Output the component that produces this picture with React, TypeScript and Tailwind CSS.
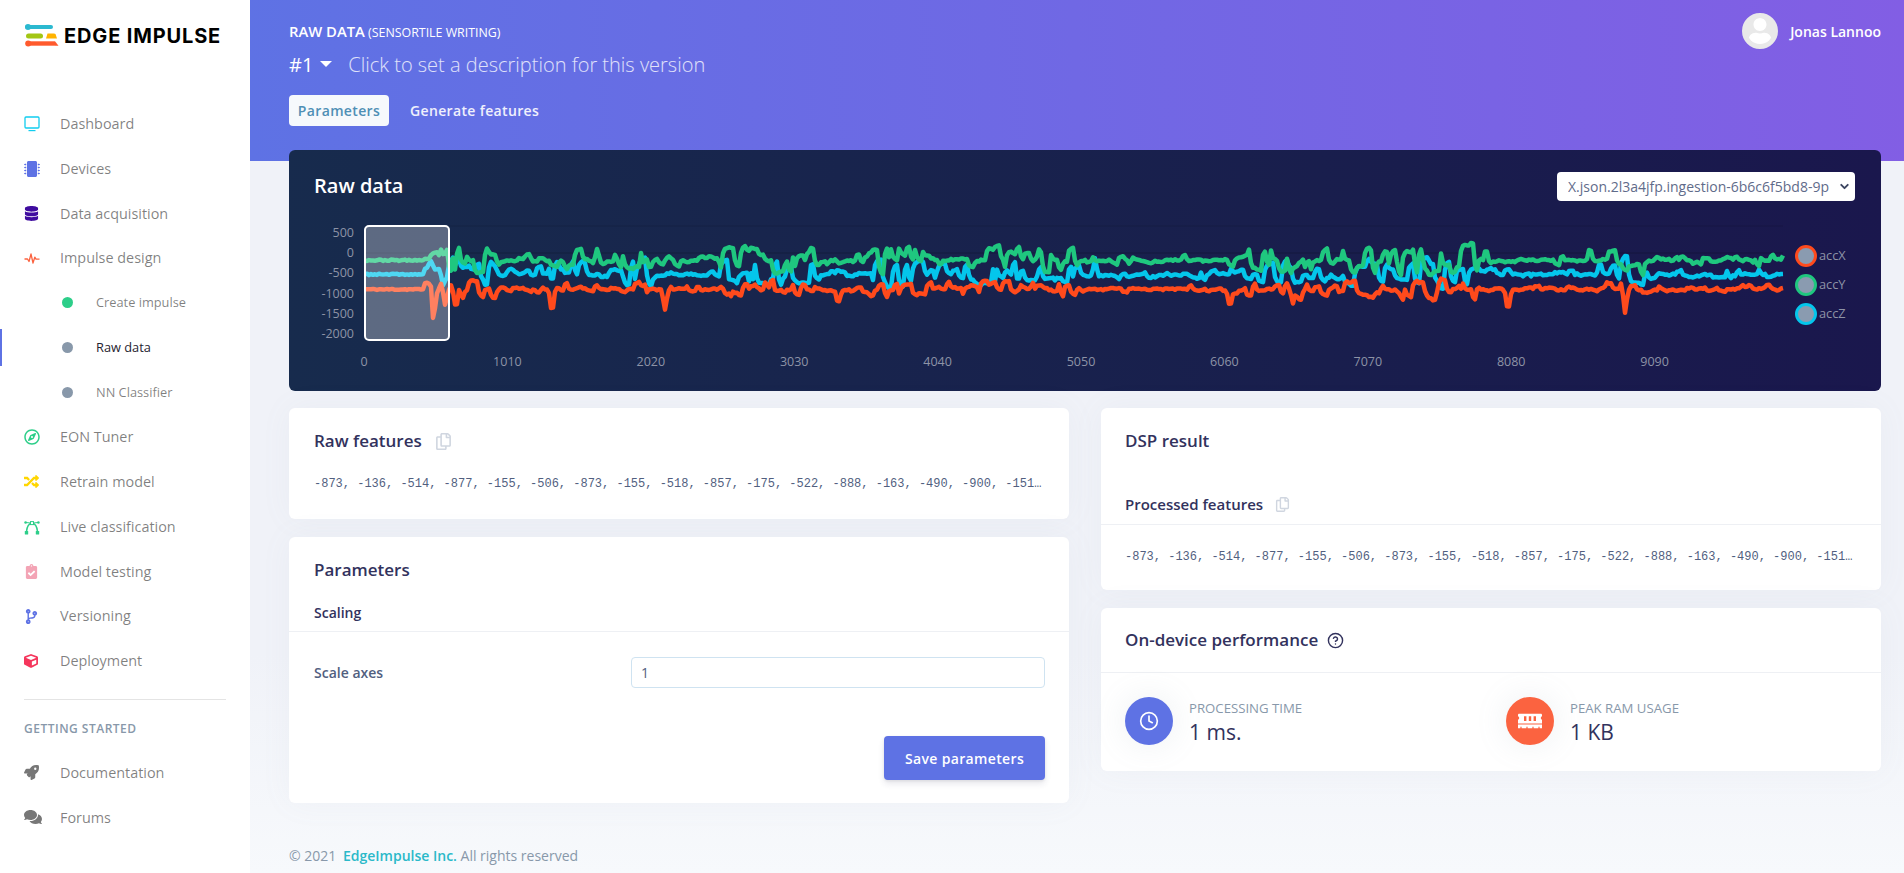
import React from "react";
import { Clock, CircleHelp, ChevronDown } from "lucide-react";
import { FaMicrochip, FaDatabase, FaRandom, FaClipboardCheck, FaCodeBranch, FaCube, FaRocket, FaComments, FaRegCompass, FaRegCopy, FaMemory, FaUser } from "react-icons/fa";

const sans = "font-['Open_Sans','Noto_Sans',sans-serif]";

function rng(seed: number) {
  return () => {
    seed |= 0; seed = (seed + 0x6d2b79f5) | 0;
    let t = Math.imul(seed ^ (seed >>> 15), 1 | seed);
    t = (t + Math.imul(t ^ (t >>> 7), 61 | t)) ^ t;
    return ((t ^ (t >>> 14)) >>> 0) / 4294967296;
  };
}

const X0 = 76, X1 = 1494, ZERO = 43;
const toY = (v: number) => ZERO - (v * 20.2) / 500;

// shared "movement" envelope: the three axes are busy at the same moments
const envelope: number[] = (() => {
  const r = rng(5);
  const out: number[] = [];
  let e = 0.4, left = 0;
  for (let x = X0; x <= X1; x += 2) {
    if (left-- <= 0) { e = r() < 0.45 ? 0.3 + r() * 0.2 : 0.85 + r() * 0.4; left = 10 + Math.floor(r() * 20); }
    out.push(e);
  }
  return out;
})();

function series(seed: number, base: number, up: number, down: number, rate: number, spikes: [number, number][]) {
  const r = rng(seed);
  const pts: string[] = [];
  let cur = base, target = base, left = 0, i = 0;
  for (let x = X0; x <= X1; x += 2, i++) {
    const page = x + 289;
    let v: number;
    if (page < 425) {
      v = base + (r() - 0.5) * 34;
      cur = v;
    } else {
      const e = envelope[i];
      if (left-- <= 0) {
        left = Math.floor(r() * 3);
        const roll = r();
        if (roll < rate * e) target = base + up * e * (0.3 + r() * 0.9);
        else if (roll < rate * e * 2) target = base - down * e * (0.3 + r() * 0.9);
        else target = base + (r() - 0.5) * 70;
      }
      cur += (target - cur) * 0.7;
      v = cur + (r() - 0.5) * 40;
    }
    for (const [sx, sv] of spikes) {
      const d = Math.abs(page - sx);
      if (d < 3.5) v = v + ((sv - v) * (3.5 - d)) / 3.5;
    }
    pts.push(`${x},${toY(v).toFixed(1)}`);
  }
  return pts.join(" ");
}

const red = series(11, -900, 220, 210, 0.3, [[431, -650], [434, -1920], [437, -1000], [445, -1280], [451, -800], [456, -1450], [552, -1560], [665, -1400], [838, -1300], [1230, -1380], [1508, -1500], [1293, -1250], [1625, -1480]]);
const green = series(23, -180, 330, 300, 0.42, [[437, 20], [441, 110], [444, -60], [597, 100], [745, 170], [1040, 180], [1590, 150], [1486, 170]]);
const blue = series(37, -530, 360, 270, 0.5, [[431, -200], [436, -420], [443, -800], [556, -150], [1095, -130], [1600, -200]]);

function Chart() {
  const yl = [500, 0, -500, -1000, -1500, -2000];
  const xl = ["0", "1010", "2020", "3030", "4040", "5050", "6060", "7070", "8080", "9090"];
  const leg: [string, string][] = [["#ff4a1c", "accX"], ["#1fc77f", "accY"], ["#04c6ec", "accZ"]];
  return (
    <svg width={1592} height={175} className="block" style={{ fontFamily: "'Open Sans',sans-serif" }}>
      <line x1={76} x2={1494} y1={16} y2={16} stroke="#000" strokeOpacity={0.12} />
      <line x1={76} x2={1494} y1={43} y2={43} stroke="#000" strokeOpacity={0.2} />
      {yl.map((v, i) => (
        <text key={v} x={65} y={27 + i * 20.2} textAnchor="end" fontSize={12.5} fill="#8d93a6">{v}</text>
      ))}
      {xl.map((t, i) => (
        <text key={t} x={75 + i * 143.4} y={156} textAnchor="middle" fontSize={12.5} fill="#8d93a6">{t}</text>
      ))}
      <polyline points={blue} fill="none" stroke="#04c6ec" strokeWidth={4.5} strokeLinejoin="round" />
      <polyline points={green} fill="none" stroke="#1fc77f" strokeWidth={4.5} strokeLinejoin="round" />
      <polyline points={red} fill="none" stroke="#ff4a1c" strokeWidth={4.5} strokeLinejoin="round" />
      <rect x={76} y={16} width={84} height={114} rx={4} fill="#fff" fillOpacity={0.3} stroke="#fff" strokeWidth={2} />
      {leg.map(([c, n], i) => (
        <g key={n}>
          <circle cx={1517} cy={46 + i * 29} r={9.5} fill="#8a9bb0" stroke={c} strokeWidth={3} />
          <text x={1530} y={50 + i * 29} fontSize={12.8} fill="#8d93a6">{n}</text>
        </g>
      ))}
    </svg>
  );
}

function Bezier() {
  return (
    <svg width={16} height={16} viewBox="0 0 16 16" fill="none">
      <path d="M2.5 12.5C3 7.5 5 4.5 8 4c3 .5 5 3.5 5.5 8.5" stroke="#2dce89" strokeWidth={1.5} />
      <path d="M2 3.5L6.5 4M9.5 4L14 3.5" stroke="#2dce89" strokeWidth={1} />
      <rect x={6.5} y={2.6} width={3} height={3} fill="#fff" stroke="#2dce89" strokeWidth={1} />
      <circle cx={1.6} cy={3.5} r={1.3} fill="#2dce89" />
      <circle cx={14.4} cy={3.5} r={1.3} fill="#2dce89" />
      <rect x={0.8} y={12} width={3.4} height={3.6} rx={0.5} fill="#2dce89" />
      <rect x={11.8} y={12} width={3.4} height={3.6} rx={0.5} fill="#2dce89" />
    </svg>
  );
}

function Screen() {
  return (
    <svg width={16} height={16} viewBox="0 0 16 16" fill="none">
      <rect x={1} y={1} width={14} height={11} rx={1} stroke="#11cdef" strokeWidth={1.3} />
      <path d="M4.5 14.6h7" stroke="#11cdef" strokeWidth={1.2} />
    </svg>
  );
}

function Wave() {
  return (
    <svg width={16} height={16} viewBox="0 0 16 16" fill="none">
      <path d="M0.5 9H3.5L5 11.5 7 4 9 13 10.8 7.2 12 9.2H15.5" stroke="#fb6340" strokeWidth={1.3} strokeLinejoin="round" />
    </svg>
  );
}

function Logo() {
  return (
    <svg width={34} height={24} viewBox="0 0 34 24">
      <path d="M2 3h24" stroke="#2bb9d0" strokeWidth={4} strokeLinecap="round" />
      <circle cx={3} cy={3} r={3} fill="#2bb9d0" />
      <rect x={1} y={9.5} width={17} height={5} rx={2.5} fill="#a3c614" />
      <path d="M21 14.5 l1.5-5 h6.5 a2 2 0 0 1 2 2 l1 3z" fill="#ffb300" />
      <path d="M2 19.5h28" stroke="#ff5a2d" strokeWidth={4.4} />
      <circle cx={3.2} cy={19.5} r={3} fill="#ff5a2d" />
      <path d="M30 17.3 l3.5 4.4 h-3.5z" fill="#ff5a2d" />
    </svg>
  );
}

type Item = { label: string; icon?: React.ReactNode; dot?: string; active?: boolean };
const items: Item[] = [
  { label: "Dashboard", icon: <Screen /> },
  { label: "Devices", icon: <FaMicrochip size={16} color="#5e72e4" /> },
  { label: "Data acquisition", icon: <FaDatabase size={15} color="#3f0c9f" /> },
  { label: "Impulse design", icon: <Wave /> },
  { label: "Create impulse", dot: "bg-[#2dce89]" },
  { label: "Raw data", dot: "bg-[#8898aa]", active: true },
  { label: "NN Classifier", dot: "bg-[#8898aa]" },
  { label: "EON Tuner", icon: <FaRegCompass size={16} color="#2dce89" /> },
  { label: "Retrain model", icon: <FaRandom size={15} color="#ffd600" /> },
  { label: "Live classification", icon: <Bezier /> },
  { label: "Model testing", icon: <FaClipboardCheck size={15} color="#f3a4b5" /> },
  { label: "Versioning", icon: <FaCodeBranch size={15} color="#5e72e4" /> },
  { label: "Deployment", icon: <FaCube size={14} color="#f5365c" /> },
];

function NavRow({ item }: { item: Item }) {
  if (item.dot) {
    return (
      <div className="relative flex h-[44.75px] items-center pl-[62px]">
        {item.active && <div className="absolute left-0 top-[4px] h-[37px] w-[2px] bg-[#5e72e4]" />}
        <span className={`h-[11px] w-[11px] rounded-full ${item.dot}`} />
        <span className={`ml-[23px] text-[12.8px] ${item.active ? "text-[#1f2430]" : "text-black/50"}`}>{item.label}</span>
      </div>
    );
  }
  return (
    <div className="flex h-[44.75px] items-center pl-[24px]">
      <span className="flex w-[36px] items-center">{item.icon}</span>
      <span className="text-[14.4px] text-black/50">{item.label}</span>
    </div>
  );
}

function Sidebar() {
  return (
    <aside className="flex h-[873px] w-[250px] shrink-0 flex-col bg-white">
      <div className="flex h-[101.5px] items-start gap-[5px] pl-[25px] pt-[24px]">
        <Logo />
        <span className="font-['Inter',sans-serif] text-[20px] font-bold leading-[24px] tracking-[0.85px] text-black">EDGE IMPULSE</span>
      </div>
      {items.map((i) => <NavRow key={i.label} item={i} />)}
      <div className="mx-[24px] mt-[16px] border-t border-[#e4e4e4]" />
      <div className="ml-[24px] mt-[20px] text-[12px] font-semibold leading-[18px] tracking-[0.5px] text-[#8898aa]">GETTING STARTED</div>
      <div className="mt-[12px]">
        <NavRow item={{ label: "Documentation", icon: <FaRocket size={15} color="#777" /> }} />
        <NavRow item={{ label: "Forums", icon: <FaComments size={18} color="#777" /> }} />
      </div>
    </aside>
  );
}

function Header() {
  return (
    <header className="h-[161px] bg-[linear-gradient(87deg,#5e72e4,#825ee4)] pl-[39px] pr-[23px] text-white">
      <div className="flex items-start justify-between">
        <div>
          <div className="pt-[22px] text-[12.4px] leading-[19px]">
            <span className="text-[14.8px] font-semibold">RAW DATA</span> <span>(SENSORTILE WRITING)</span>
          </div>
          <div className="mt-[8px] flex h-[30px] items-center text-[20px] leading-[30px]">
            <span>#1</span>
            <span className="ml-[7px] mt-[-2px] h-0 w-0 border-x-[6px] border-t-[6px] border-x-transparent border-t-white" />
            <span className="ml-[16px] font-light text-white/80">Click to set a description for this version</span>
          </div>
        </div>
        <div className="flex items-center pt-[13px]">
          <span className="flex h-[36px] w-[36px] items-end justify-center overflow-hidden rounded-full border-[5px] border-[#e9e9e9] bg-[#e9e9e9]">
            <FaUser size={26} color="#fff" />
          </span>
          <span className="ml-[12px] text-[14px] font-semibold">Jonas Lannoo</span>
        </div>
      </div>
      <div className="mt-[15px] flex items-center">
        <span className="flex h-[31px] w-[100px] items-center justify-center rounded-[4px] bg-[#f6f9fc] text-[14px] font-semibold tracking-[0.35px] text-[#4f8fb5]">Parameters</span>
        <span className="ml-[21px] text-[14px] font-semibold tracking-[0.35px] text-white/90">Generate features</span>
      </div>
    </header>
  );
}

const raw = "-873, -136, -514, -877, -155, -506, -873, -155, -518, -857, -175, -522, -888, -163, -490, -900, -151, -502, -881, -147, -510, -869, -159";
const card = "rounded-[6px] bg-white shadow-[0_0_32px_rgba(136,152,170,0.06)]";
const mono = "truncate font-['Liberation_Mono',monospace] text-[12px] leading-[18px] text-[#525f7f]";

function Stat({ color, icon, label, value }: { color: string; icon: React.ReactNode; label: string; value: string }) {
  return (
    <div className="flex items-center">
      <span className={`flex h-[48px] w-[48px] items-center justify-center rounded-full shadow-[0_0_32px_rgba(136,152,170,0.15)] ${color}`}>{icon}</span>
      <div className="ml-[16px]">
        <div className="text-[13.2px] font-medium leading-[18px] text-[#8898aa]">{label}</div>
        <div className="mt-[3px] text-[21px] font-medium leading-[24px] text-[#32325d]">{value}</div>
      </div>
    </div>
  );
}

function Content() {
  return (
    <div className="relative -mt-[11px] pl-[39px] pr-[23px]">
      <section className="h-[241px] rounded-[6px] bg-[linear-gradient(87deg,#172b4d,#1a174d)]">
        <div className="flex h-[60px] items-start justify-between pl-[25px] pr-[26px] pt-[22px]">
          <span className="text-[20px] font-semibold leading-[28px] text-white">Raw data</span>
          <div className="relative">
            <select defaultValue="a" className="block h-[29px] w-[298px] appearance-none rounded-[4px] bg-white pl-[11px] pr-[20px] text-[14px] text-[#5f6b8a] outline-none">
              <option value="a">X.json.2l3a4jfp.ingestion-6b6c6f5bd8-9p</option>
            </select>
            <ChevronDown size={13} strokeWidth={3.5} color="#3b4560" className="pointer-events-none absolute right-[4px] top-[8px]" />
          </div>
        </div>
        <Chart />
      </section>
      <div className="mt-[17px] flex gap-[32px]">
        <div className="flex min-w-0 flex-1 flex-col gap-[18px]">
          <section className={`${card} h-[111px] pl-[25px] pr-[24px]`}>
            <div className="flex items-center pt-[20px]">
              <span className="text-[17px] font-semibold leading-[26px] text-[#32325d]">Raw features</span>
              <FaRegCopy size={17} color="#d0d6e0" className="ml-[13px]" />
            </div>
            <div className={`${mono} mt-[21px]`}>{raw}</div>
          </section>
          <section className={`${card} h-[266px]`}>
            <div className="px-[25px] pt-[20px] text-[17px] font-semibold leading-[26px] text-[#32325d]">Parameters</div>
            <div className="mt-[20px] border-b border-[#eef0f4] px-[25px] pb-[8px] text-[14px] font-semibold leading-[20px] text-[#32325d]">Scaling</div>
            <div className="mt-[25px] flex items-center pl-[25px] pr-[24px]">
              <span className="w-[317px] text-[14px] font-semibold text-[#525f7f]">Scale axes</span>
              <div className="flex h-[31px] flex-1 items-center rounded-[4px] border border-[#cfe3f1] px-[9px] text-[14px] text-[#525f7f]">1</div>
            </div>
            <div className="mt-[48px] flex justify-end pl-[25px] pr-[24px]">
              <span className="flex h-[44px] w-[161px] items-center justify-center rounded-[4px] bg-[#5e72e4] text-[14px] font-semibold tracking-[0.35px] text-white shadow-[0_4px_6px_rgba(50,50,93,0.11),0_1px_3px_rgba(0,0,0,0.08)]">Save parameters</span>
            </div>
          </section>
        </div>
        <div className="flex min-w-0 flex-1 flex-col gap-[18px]">
          <section className={`${card} h-[182px]`}>
            <div className="px-[24px] pt-[20px] text-[17px] font-semibold leading-[26px] text-[#32325d]">DSP result</div>
            <div className="mt-[39px] flex items-center border-b border-[#eef0f4] px-[24px] pb-[9px]">
              <span className="text-[15px] font-semibold leading-[22px] text-[#32325d]">Processed features</span>
              <FaRegCopy size={15} color="#d0d6e0" className="ml-[12px]" />
            </div>
            <div className={`${mono} mt-[23px] px-[24px]`}>{raw}</div>
          </section>
          <section className={`${card} h-[163px]`}>
            <div className="flex h-[65px] items-center border-b border-[#eef0f4] px-[24px]">
              <span className="text-[17px] font-semibold text-[#32325d]">On-device performance</span>
              <CircleHelp size={17} color="#32325d" className="ml-[9px]" />
            </div>
            <div className="flex px-[24px] pt-[24px]">
              <div className="w-[381px]">
                <Stat color="bg-[#5e72e4]" icon={<Clock size={20} color="#fff" />} label="PROCESSING TIME" value="1 ms." />
              </div>
              <Stat color="bg-[#fb6340]" icon={<FaMemory size={24} color="#fff" />} label="PEAK RAM USAGE" value="1 KB" />
            </div>
          </section>
        </div>
      </div>
      <footer className="mt-[43px] text-[14px] leading-[20px] text-[#8898aa]">
        © 2021 <span className="ml-[3px] font-semibold text-[#2bb9c9]">EdgeImpulse Inc.</span> All rights reserved
      </footer>
    </div>
  );
}

export default function App() {
  return (
    <div className={`flex h-[873px] w-[1904px] overflow-hidden bg-white ${sans}`}>
      <Sidebar />
      <main className="h-[873px] min-w-0 flex-1 bg-[linear-gradient(#f0f2f8_0%,#f0f2f8_75%,#f7f9fc_100%)]">
        <Header />
        <Content />
      </main>
    </div>
  );
}
